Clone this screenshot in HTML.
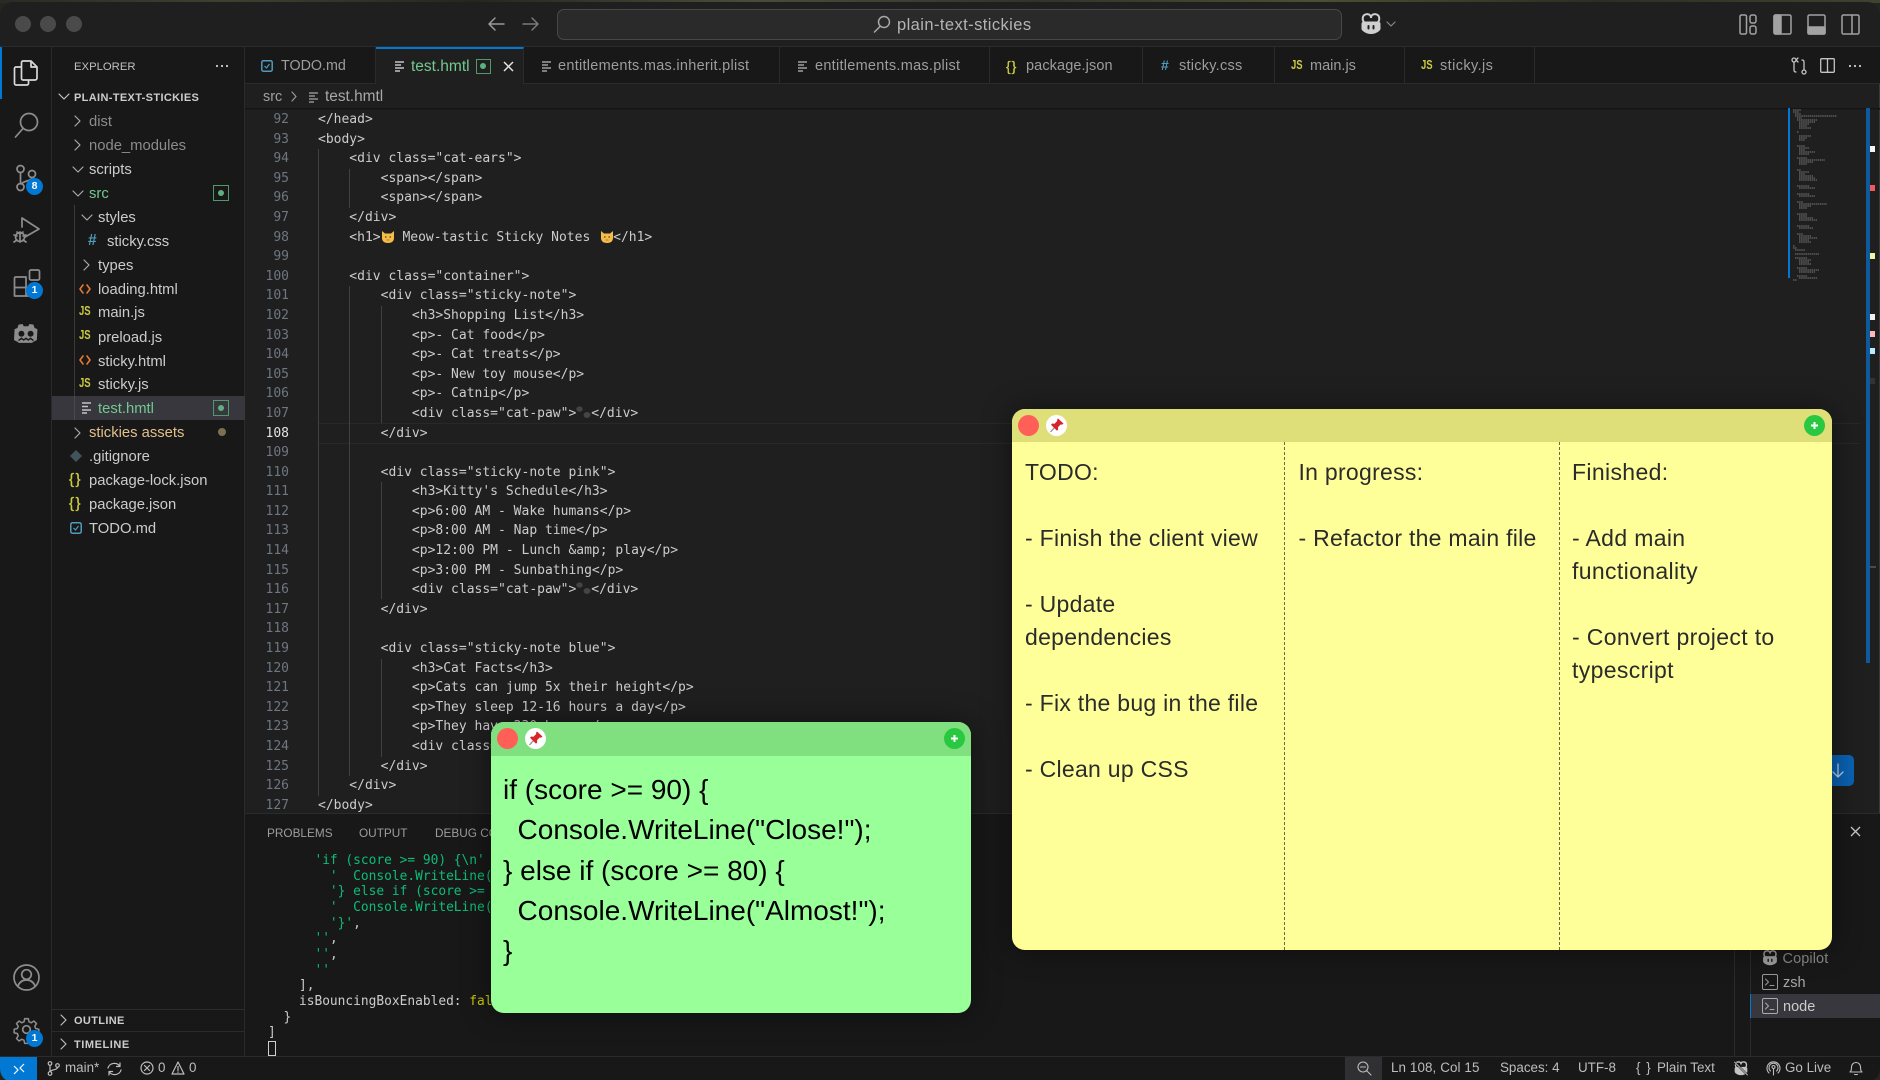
<!DOCTYPE html>
<html lang="en">
<head>
<meta charset="utf-8">
<title>plain-text-stickies</title>
<style>
*{box-sizing:border-box}
html,body{margin:0;padding:0;width:1880px;height:1080px;overflow:hidden;background:#23261c}
body{font-family:"Liberation Sans","DejaVu Sans",sans-serif;font-size:14.5px;color:#ccc;position:relative}
.strip{position:absolute;left:0;top:0;width:1880px;height:3px;background:linear-gradient(90deg,#2a2a24,#3c4230 12%,#26261e 25%,#4a4c3a 40%,#30342a 55%,#4a5030 70%,#2c2e22 85%,#3e4430)}
.win{position:absolute;left:0;top:2px;width:1880px;height:1078px;background:#1f1f1f;border-radius:13px 13px 13px 13px;overflow:hidden;box-shadow:inset 0 0 0 1px #3a3a3a}
.a{position:absolute}
.t{position:absolute;white-space:pre}
svg{display:block;overflow:visible}
svg.a{position:absolute}
.i{fill:none;stroke:#8d8d8d;stroke-width:1.5;stroke-linecap:round;stroke-linejoin:round}
.r{position:absolute;white-space:pre;height:24px;line-height:24px;font-size:14.8px;color:#cccccc;margin-top:1px}
.dim{color:#8c8c8c}.gr{color:#73c991}.ye{color:#e2c08d}
.tab{position:absolute;top:45px;height:37px;line-height:38px;background:#181818;border-right:1px solid #2b2b2b;border-bottom:1px solid #2b2b2b;color:#9d9d9d;font-size:14.5px;white-space:pre}
pre{margin:0;font-family:"DejaVu Sans Mono","Liberation Mono",monospace}
.hdr{font-size:11px;font-weight:bold;color:#cccccc;letter-spacing:.35px;margin-top:1px}
.gd{position:absolute;width:1px;background:#404040}
.badge{position:absolute;width:17px;height:17px;border-radius:50%;background:#0078d4;color:#fff;font-size:10.5px;font-weight:bold;text-align:center;line-height:17px}
.sb{position:absolute;top:1057px;font-size:13.4px;color:#bdbdbd;line-height:22px;white-space:pre}
.sticky{position:absolute;border-radius:13px;overflow:hidden;box-shadow:0 0 30px rgba(0,0,0,.45)}
.bar{position:absolute;left:0;top:0;width:100%}
.close{position:absolute;width:21px;height:21px;border-radius:50%;background:#ff5f57}
.pin{position:absolute;width:21px;height:21px;border-radius:50%;background:#fff}
.plus{position:absolute;width:21px;height:21px;border-radius:50%;background:#28c840;color:#fff}
.mk{position:absolute;left:1870px;width:5px;height:6px}
.js{position:absolute;font-size:12.5px;font-weight:bold;line-height:14px;color:#cbcb41;transform:scaleX(.76);transform-origin:0 50%;white-space:pre}
.br{position:absolute;font-size:15px;line-height:24px;color:#cbcb41;letter-spacing:1.5px;white-space:pre;-webkit-text-stroke:.3px #cbcb41}
</style>
</head>
<body>
<div class="strip"></div>
<div class="win" style="top:0;height:1080px;margin-top:2px;">
<div style="position:absolute;left:0;top:-2px;width:1880px;height:1080px">

<!-- title bar -->
<div class="a" style="left:0;top:0;width:1880px;height:47px;background:#1f1f1f;border-bottom:1px solid #2b2b2b"></div>
<div class="a" style="left:15px;top:16px;width:16px;height:16px;border-radius:50%;background:#4a4a4a"></div>
<div class="a" style="left:40px;top:16px;width:16px;height:16px;border-radius:50%;background:#4a4a4a"></div>
<div class="a" style="left:66px;top:16px;width:16px;height:16px;border-radius:50%;background:#4a4a4a"></div>
<svg class="a i" style="left:487px;top:16px;stroke:#9a9a9a" width="18" height="16"><path d="M17 8H2M8 2L2 8l6 6"/></svg>
<svg class="a i" style="left:522px;top:16px;stroke:#7a7a7a" width="18" height="16"><path d="M1 8h15M10 2l6 6-6 6"/></svg>
<div class="a" style="left:557px;top:9px;width:785px;height:31px;background:#2a2a2a;border:1.5px solid #484848;border-radius:7px"></div>
<svg class="a i" style="left:873px;top:15px;stroke:#a8a8a8" width="18" height="18"><circle cx="11" cy="7" r="5.5"/><path d="M7 11.5L1.5 17"/></svg>
<div class="t" style="left:897px;top:15px;font-size:16.5px;line-height:20px;letter-spacing:.42px;color:#b4b4b4">plain-text-stickies</div>
<svg class="a" style="left:1359px;top:13px" width="24" height="22" viewBox="0 0 24 22"><path fill="none" stroke="#cfcfcf" stroke-width="2" d="M6.500 10C4 9 3.500 7 3.800 4.800 4.200 2 6.500 1 9 1.200c2 .2 3 1.800 3 3.800 0-2 1-3.600 3-3.800 2.500-.2 4.800.8 5.200 3.600.3 2.200-.2 4.200-2.700 5.200"/><path fill="#cfcfcf" d="M2.500 11c0-1.500 1-2.500 3-2.500h13c2 0 3 1 3 2.500v5c0 1-3.500 5-9.500 5s-9.500-4-9.500-5z"/><rect x="8.500" y="12" width="2" height="4.500" rx="1" fill="#1f1f1f"/><rect x="13.500" y="12" width="2" height="4.500" rx="1" fill="#1f1f1f"/></svg>
<svg class="a i" style="left:1386px;top:21px;stroke:#888;stroke-width:1.200" width="10" height="6"><path d="M1 1l4 4 4-4"/></svg>
<!-- layout buttons -->
<svg class="a" style="left:1739px;top:13px" width="130" height="22" fill="none" stroke="#a2a2a2" stroke-width="1.500">
<rect x="1" y="2" width="6.500" height="19" rx="1.500"/><rect x="11" y="2" width="6" height="8" rx="2"/><rect x="11" y="13" width="6" height="8" rx="2"/>
<rect x="35" y="2" width="17" height="19" rx="1.500"/><rect x="35" y="2" width="7" height="19" rx="1.500" fill="#a2a2a2"/>
<rect x="69" y="2" width="17" height="19" rx="1.500"/><rect x="69" y="14" width="17" height="7" rx="1" fill="#a2a2a2"/>
<rect x="103" y="2" width="17" height="19" rx="1.500"/><path d="M113 2v19"/>
</svg>

<!-- activity bar -->
<div class="a" style="left:0;top:47px;width:52px;height:1010px;background:#181818;border-right:1px solid #2b2b2b"></div>
<div class="a" style="left:0;top:47px;width:2px;height:52px;background:#0078d4"></div>
<svg class="a" style="left:13px;top:59px;stroke:#d8d8d8;fill:none;stroke-width:1.700;stroke-linejoin:round" width="26" height="28"><path d="M10 2h8l6 6v11a2 2 0 0 1-2 2H10a1.500 1.500 0 0 1-1.500-1.500V3.500A1.500 1.500 0 0 1 10 2zM8.500 8H3a1.500 1.500 0 0 0-1.500 1.500v15A1.500 1.500 0 0 0 3 26h11a1.500 1.500 0 0 0 1.500-1.500V21"/><path d="M18 2v6h6"/></svg>
<svg class="a i" style="left:14px;top:112px;stroke-width:1.700" width="26" height="28"><circle cx="15" cy="10" r="8.500"/><path d="M9 16.500L1.500 25"/></svg>
<svg class="a i" style="left:15px;top:164px;stroke-width:1.700" width="24" height="28"><circle cx="5.500" cy="5" r="3.500"/><circle cx="5.500" cy="23" r="3.500"/><circle cx="17" cy="10" r="3.500"/><path d="M5.500 8.500v11M17 13.500c0 3.500-8 3-11 6.500"/></svg>
<div class="badge" style="left:26px;top:178px">8</div>
<svg class="a i" style="left:12px;top:216px;stroke-width:1.700" width="30" height="30"><path d="M10 2l17 11-14 8M10 2v9"/><circle cx="8" cy="21" r="4.500"/><path d="M8 16v10M2 19l3 1M2 26l3-2M14 19l-3 1M14 26l-3-2"/><path d="M5 16l2 1.500M11 16l-2 1.500"/></svg>
<svg class="a i" style="left:13px;top:269px;stroke-width:1.700" width="28" height="28"><rect x="16.500" y="1" width="10" height="10" rx="1.500"/><path d="M2.500 8h10.500v10.500M13 18.500h10.500M13 18.500H1.500V9a1 1 0 0 1 1-1M13 18.500V27M1.500 18.500V27H13M23.500 18.500V27H13"/></svg>
<div class="badge" style="left:26px;top:282px">1</div>
<svg class="a" style="left:14px;top:323px" width="24" height="22" viewBox="1.500 3 21 18.500"><path fill="#8c8c8c" d="M2 8l2.500-1 1-3 3.500-.5 1 2h4l1-2 3.500.5 1 3 2.500 1-.5 9.500c-2 1.500-3 1-4 2.500h-12c-1-1.500-2-1-4-2.500z"/><circle cx="8" cy="12" r="2.600" fill="#181818"/><circle cx="16" cy="12" r="2.600" fill="#181818"/><path d="M5.500 18l2.500-2 2 1.500 2-1.500 2 1.500 2-1.500 2.500 2" stroke="#181818" fill="none" stroke-width="1.200"/></svg>
<svg class="a i" style="left:13px;top:964px;stroke-width:1.700" width="27" height="27"><circle cx="13.500" cy="13.500" r="12.500"/><circle cx="13.500" cy="10.500" r="4.800"/><path d="M5 22c1.500-4 4-6 8.500-6s7 2 8.500 6"/></svg>
<svg class="a" style="left:13px;top:1016px" width="27" height="27" viewBox="0 0 27 27"><circle cx="13.500" cy="13.500" r="3.800" fill="none" stroke="#8d8d8d" stroke-width="1.700"/><path fill="none" stroke="#8d8d8d" stroke-width="1.700" stroke-linejoin="round" d="M11.500 1.500h4l.8 3.500 2.500 1 3-1.900 2.800 2.800-1.900 3 1 2.500 3.500.8v4l-3.500.8-1 2.500 1.900 3-2.800 2.800-3-1.900-2.500 1-.8 3.500h-4l-.8-3.500-2.500-1-3 1.900-2.800-2.800 1.900-3-1-2.500-3.500-.8v-4l3.500-.8 1-2.500-1.900-3 2.800-2.800 3 1.900 2.500-1z" transform="translate(1.350 1.350) scale(.9)"/></svg>
<div class="badge" style="left:26px;top:1030px">1</div>

<!-- sidebar -->
<div class="a" style="left:52px;top:47px;width:193px;height:1010px;background:#181818;border-right:1px solid #2b2b2b"></div>
<div class="t" style="left:74px;top:59px;font-size:11.300px;line-height:16px;color:#c0c0c0">EXPLORER</div>
<svg class="a" style="left:215px;top:64px" width="14" height="4" fill="#ccc"><circle cx="2" cy="2" r="1.100"/><circle cx="7" cy="2" r="1.100"/><circle cx="12" cy="2" r="1.100"/></svg>
<svg class="a i" style="left:58px;top:93px;stroke:#c4c4c4;stroke-width:1.200" width="12" height="8"><path d="M1 1l5 5 5-5"/></svg>
<div class="t hdr" style="left:74px;top:89px;line-height:16px">PLAIN-TEXT-STICKIES</div>

<svg class="a i" style="left:74px;top:115px;stroke:#aaa;stroke-width:1.200" width="7" height="12"><path d="M1 1l5 5-5 5"/></svg>
<div class="r dim" style="left:89px;top:109px">dist</div>
<svg class="a i" style="left:74px;top:139px;stroke:#aaa;stroke-width:1.200" width="7" height="12"><path d="M1 1l5 5-5 5"/></svg>
<div class="r dim" style="left:89px;top:133px">node_modules</div>
<svg class="a i" style="left:72px;top:166px;stroke:#aaa;stroke-width:1.200" width="12" height="7"><path d="M1 1l5 5 5-5"/></svg>
<div class="r" style="left:89px;top:157px">scripts</div>
<svg class="a i" style="left:72px;top:190px;stroke:#aaa;stroke-width:1.200" width="12" height="7"><path d="M1 1l5 5 5-5"/></svg>
<div class="r gr" style="left:89px;top:181px">src</div>
<div class="a" style="left:213px;top:185px;width:16px;height:16px;border:1.500px solid #4f9a6c"><div class="a" style="left:3.500px;top:3.500px;width:6px;height:6px;border-radius:50%;background:#5fb080"></div></div>
<div class="gd" style="left:74px;top:205px;height:215px;background:#3a3a3a"></div>
<svg class="a i" style="left:81px;top:214px;stroke:#aaa;stroke-width:1.200" width="12" height="7"><path d="M1 1l5 5 5-5"/></svg>
<div class="r" style="left:98px;top:205px">styles</div>
<div class="t" style="left:88px;top:229px;font-size:15.500px;font-weight:bold;line-height:24px;color:#519aba">#</div>
<div class="r" style="left:107px;top:229px">sticky.css</div>
<svg class="a i" style="left:83px;top:259px;stroke:#aaa;stroke-width:1.200" width="7" height="12"><path d="M1 1l5 5-5 5"/></svg>
<div class="r" style="left:98px;top:253px">types</div>
<svg class="a i" style="left:79px;top:284px;stroke:#e37933;stroke-width:1.600" width="12" height="10"><path d="M4 1L1 5l3 4M8 1l3 4-3 4"/></svg>
<div class="r" style="left:98px;top:277px">loading.html</div>
<div class="js" style="left:79px;top:304px">JS</div>
<div class="r" style="left:98px;top:300px">main.js</div>
<div class="js" style="left:79px;top:328px">JS</div>
<div class="r" style="left:98px;top:325px">preload.js</div>
<svg class="a i" style="left:79px;top:355px;stroke:#e37933;stroke-width:1.600" width="12" height="10"><path d="M4 1L1 5l3 4M8 1l3 4-3 4"/></svg>
<div class="r" style="left:98px;top:349px">sticky.html</div>
<div class="js" style="left:79px;top:376px">JS</div>
<div class="r" style="left:98px;top:372px">sticky.js</div>
<div class="a" style="left:52px;top:396px;width:193px;height:24px;background:#37373d"></div>
<div class="gd" style="left:74px;top:396px;height:24px;background:#4a4a4e"></div>
<svg class="a" style="left:82px;top:402px;stroke:#c4c4c4;stroke-width:1.500" width="10" height="12"><path d="M0 1h9M0 4.500h6M0 8h9M0 11h5"/></svg>
<div class="r gr" style="left:98px;top:396px">test.hmtl</div>
<div class="a" style="left:213px;top:400px;width:16px;height:16px;border:1.500px solid #4f9a6c"><div class="a" style="left:3.500px;top:3.500px;width:6px;height:6px;border-radius:50%;background:#5fb080"></div></div>
<svg class="a i" style="left:74px;top:427px;stroke:#aaa;stroke-width:1.200" width="7" height="12"><path d="M1 1l5 5-5 5"/></svg>
<div class="r ye" style="left:89px;top:420px">stickies assets</div>
<div class="a" style="left:218px;top:428px;width:8px;height:8px;border-radius:50%;background:#7d6f52"></div>
<svg class="a" style="left:70px;top:450px" width="12" height="12"><path d="M6 0l6 6-6 6-6-6z" fill="#41535b"/></svg>
<div class="r" style="left:89px;top:444px">.gitignore</div>
<div class="br" style="left:69px;top:468px">{}</div>
<div class="r" style="left:89px;top:468px">package-lock.json</div>
<div class="br" style="left:69px;top:492px">{}</div>
<div class="r" style="left:89px;top:492px">package.json</div>
<svg class="a" style="left:70px;top:522px" width="12" height="12"><rect x=".8" y=".8" width="10.400" height="10.400" rx="1.500" fill="none" stroke="#519aba" stroke-width="1.500"/><path d="M3.500 6l2 2 3-4" fill="none" stroke="#519aba" stroke-width="1.200"/></svg>
<div class="r" style="left:89px;top:516px">TODO.md</div>

<div class="a" style="left:52px;top:1009px;width:193px;height:1px;background:#2b2b2b"></div>
<svg class="a i" style="left:60px;top:1014px;stroke:#bbb;stroke-width:1.200" width="7" height="12"><path d="M1 1l5 5-5 5"/></svg>
<div class="t hdr" style="left:74px;top:1012px;line-height:16px">OUTLINE</div>
<div class="a" style="left:52px;top:1031px;width:193px;height:1px;background:#2b2b2b"></div>
<svg class="a i" style="left:60px;top:1038px;stroke:#bbb;stroke-width:1.200" width="7" height="12"><path d="M1 1l5 5-5 5"/></svg>
<div class="t hdr" style="left:74px;top:1036px;line-height:16px;letter-spacing:.55px">TIMELINE</div>

<!-- tabs -->
<div class="a" style="left:245px;top:47px;width:1635px;height:37px;background:#181818;border-bottom:1px solid #2b2b2b"></div>
<div class="tab" style="left:245px;top:47px;width:131px;padding-left:36px;font-size:14.300px">TODO.md</div>
<svg class="a" style="left:261px;top:60px" width="12" height="12"><rect x=".8" y=".8" width="10.400" height="10.400" rx="1.500" fill="none" stroke="#519aba" stroke-width="1.500"/><path d="M3.500 6l2 2 3-4" fill="none" stroke="#519aba" stroke-width="1.200"/></svg>
<div class="tab" style="left:376px;top:47px;width:148px;padding-left:35px;background:#1f1f1f;border-bottom:none;color:#73c991;border-top:2px solid #0078d4;line-height:35px;font-size:15.500px">test.hmtl</div>
<svg class="a" style="left:395px;top:61px;stroke:#c4c4c4;stroke-width:1.500" width="10" height="11"><path d="M0 1h9M0 4h6M0 7h9M0 10h5"/></svg>
<div class="a" style="left:476px;top:59px;width:15px;height:15px;border:1.500px solid #4f9a6c"><div class="a" style="left:3px;top:3px;width:6px;height:6px;border-radius:50%;background:#5fb080"></div></div>
<svg class="a" style="left:503px;top:61px;stroke:#e4e4e4;stroke-width:1.500" width="11" height="11"><path d="M1 1l9 9M10 1l-9 9"/></svg>
<div class="tab" style="left:524px;top:47px;width:256px;padding-left:34px;letter-spacing:.28px">entitlements.mas.inherit.plist</div>
<svg class="a" style="left:542px;top:61px;stroke:#bbb;stroke-width:1.300" width="10" height="11"><path d="M0 1h9M0 4h6M0 7h9M0 10h5"/></svg>
<div class="tab" style="left:780px;top:47px;width:210px;padding-left:35px;letter-spacing:.27px">entitlements.mas.plist</div>
<svg class="a" style="left:798px;top:61px;stroke:#bbb;stroke-width:1.300" width="10" height="11"><path d="M0 1h9M0 4h6M0 7h9M0 10h5"/></svg>
<div class="tab" style="left:990px;top:47px;width:153px;padding-left:36px;letter-spacing:.1px">package.json</div>
<div class="br" style="left:1006px;top:54px;font-size:14px;letter-spacing:1px">{}</div>
<div class="tab" style="left:1143px;top:47px;width:132px;padding-left:36px;letter-spacing:.25px">sticky.css</div>
<div class="t" style="left:1161px;top:55px;font-size:14px;font-weight:bold;line-height:20px;color:#519aba">#</div>
<div class="tab" style="left:1275px;top:47px;width:130px;padding-left:35px">main.js</div>
<div class="js" style="left:1291px;top:58px">JS</div>
<div class="tab" style="left:1405px;top:47px;width:130px;padding-left:35px;letter-spacing:.4px">sticky.js</div>
<div class="js" style="left:1421px;top:58px">JS</div>
<svg class="a i" style="left:1791px;top:57px;stroke:#c4c4c4;stroke-width:1.300" width="16" height="18"><circle cx="3" cy="3" r="2"/><circle cx="13" cy="15" r="2"/><path d="M3 5v8c0 1 .5 2 2 2M13 13V5c0-1-.5-2-2-2M7 1L5 3l2 2M9 1"/></svg>
<svg class="a i" style="left:1820px;top:58px;stroke:#c4c4c4;stroke-width:1.300" width="15" height="15"><rect x=".7" y=".7" width="13.600" height="13.600" rx="1"/><path d="M7.500 .7v13.600"/></svg>
<svg class="a" style="left:1848px;top:64px" width="14" height="4" fill="#ccc"><circle cx="2" cy="2" r="1.100"/><circle cx="7" cy="2" r="1.100"/><circle cx="12" cy="2" r="1.100"/></svg>

<!-- breadcrumb -->
<div class="t" style="left:263px;top:87px;font-size:14.400px;line-height:20px;color:#a0a0a0">src</div>
<svg class="a i" style="left:291px;top:91px;stroke:#999;stroke-width:1.200" width="6" height="11"><path d="M1 1l4 4.500-4 4.500"/></svg>
<svg class="a" style="left:309px;top:92px;stroke:#a8a8a8;stroke-width:1.300" width="10" height="11"><path d="M0 1h9M0 4h6M0 7h9M0 10h5"/></svg>
<div class="t" style="left:325px;top:87px;font-size:15.400px;line-height:20px;color:#a8a8a8">test.hmtl</div>
<div class="a" style="left:245px;top:108px;width:1635px;height:2px;background:linear-gradient(#111,#1f1f1f)"></div>

<!-- editor -->
<div class="a" style="left:319px;top:423px;width:1541px;height:21px;border-top:1.500px solid #282828;border-bottom:1.500px solid #282828"></div>
<!-- indent guides -->
<div class="gd" style="left:318px;top:149px;height:647px"></div>
<div class="gd" style="left:349px;top:169px;height:39px"></div>
<div class="gd" style="left:349px;top:286px;height:490px"></div>
<div class="gd" style="left:381px;top:306px;height:117px"></div>
<div class="gd" style="left:381px;top:482px;height:117px"></div>
<div class="gd" style="left:381px;top:659px;height:98px"></div>

<pre class="a" style="left:245px;top:110px;width:44px;text-align:right;font-size:13px;line-height:19.600px;color:#6e7681">92
93
94
95
96
97
98
99
100
101
102
103
104
105
106
107
<span style="color:#e4e4e4">108</span>
109
110
111
112
113
114
115
116
117
118
119
120
121
122
123
124
125
126
127</pre>
<pre class="a" style="left:318px;top:110px;font-size:13px;line-height:19.600px;color:#cccccc">&lt;/head&gt;
&lt;body&gt;
    &lt;div class="cat-ears"&gt;
        &lt;span&gt;&lt;/span&gt;
        &lt;span&gt;&lt;/span&gt;
    &lt;/div&gt;
    &lt;h1&gt;<svg style="display:inline-block;vertical-align:-2px;margin-left:1px;margin-right:1px" width="12" height="13" viewBox="0 0 12 13"><path fill="#f4bc48" d="M0 1l3 2.500h6L12 1v7c0 3-2 5-6 5s-6-2-6-5z"/><circle cx="3.800" cy="7" r=".9" fill="#7a5418"/><circle cx="8.200" cy="7" r=".9" fill="#7a5418"/><path d="M4.500 10h3" stroke="#b87a30"/></svg> Meow-tastic Sticky Notes <svg style="display:inline-block;vertical-align:-2px;margin-left:3px;margin-right:0" width="12" height="13" viewBox="0 0 12 13"><path fill="#f4bc48" d="M0 1l3 2.500h6L12 1v7c0 3-2 5-6 5s-6-2-6-5z"/><circle cx="3.800" cy="7" r=".9" fill="#7a5418"/><circle cx="8.200" cy="7" r=".9" fill="#7a5418"/><path d="M4.500 10h3" stroke="#b87a30"/></svg>&lt;/h1&gt;

    &lt;div class="container"&gt;
        &lt;div class="sticky-note"&gt;
            &lt;h3&gt;Shopping List&lt;/h3&gt;
            &lt;p&gt;- Cat food&lt;/p&gt;
            &lt;p&gt;- Cat treats&lt;/p&gt;
            &lt;p&gt;- New toy mouse&lt;/p&gt;
            &lt;p&gt;- Catnip&lt;/p&gt;
            &lt;div class="cat-paw"&gt;<svg style="display:inline-block;vertical-align:-2px" width="15" height="13" viewBox="0 0 15 13"><g fill="#444"><ellipse cx="3.500" cy="3" rx="3.200" ry="2.600"/><ellipse cx="11" cy="9" rx="3.400" ry="3"/></g></svg>&lt;/div&gt;
        &lt;/div&gt;

        &lt;div class="sticky-note pink"&gt;
            &lt;h3&gt;Kitty's Schedule&lt;/h3&gt;
            &lt;p&gt;6:00 AM - Wake humans&lt;/p&gt;
            &lt;p&gt;8:00 AM - Nap time&lt;/p&gt;
            &lt;p&gt;12:00 PM - Lunch &amp;amp; play&lt;/p&gt;
            &lt;p&gt;3:00 PM - Sunbathing&lt;/p&gt;
            &lt;div class="cat-paw"&gt;<svg style="display:inline-block;vertical-align:-2px" width="15" height="13" viewBox="0 0 15 13"><g fill="#444"><ellipse cx="3.500" cy="3" rx="3.200" ry="2.600"/><ellipse cx="11" cy="9" rx="3.400" ry="3"/></g></svg>&lt;/div&gt;
        &lt;/div&gt;

        &lt;div class="sticky-note blue"&gt;
            &lt;h3&gt;Cat Facts&lt;/h3&gt;
            &lt;p&gt;Cats can jump 5x their height&lt;/p&gt;
            &lt;p&gt;They sleep 12-16 hours a day&lt;/p&gt;
            &lt;p&gt;They have 230 bones&lt;/p&gt;
            &lt;div class="cat-paw"&gt;&lt;/div&gt;
        &lt;/div&gt;
    &lt;/div&gt;
&lt;/body&gt;</pre>

<!-- minimap -->
<div class="a" style="left:1788px;top:108px;width:1.500px;height:170px;background:#0078d4"></div>
<svg class="a" style="left:1792px;top:108px;stroke:#7a7a7a;stroke-width:1" width="60" height="175" fill="none" stroke-dasharray="1.500 .6"><path d="M1 2h8M1 4h6M3 6h6M3 8h42M5 10h5M5 12h20M7 14h16M7 16h10M7 18h8M7 20h12M5 24h2M7 28h12M7 30h8M7 32h6M5 38h8M7 40h10M7 42h6M7 44h16M7 46h10M5 50h10M7 52h26M7 54h14M7 56h8M5 62h4M7 64h10M7 66h6M7 68h14M7 70h16M7 72h18M5 78h12M7 80h16M5 86h12M7 88h16M5 94h6M7 96h28M7 98h12M7 100h8M5 106h10M7 108h8M7 110h14M7 112h18M5 118h12M7 120h14M5 126h6M7 128h12M7 130h18M7 132h10M7 134h12M1 138h2M1 140h4M3 142h10M3 146h24M3 150h12M7 152h12M7 154h10M7 156h12M5 160h10M7 162h20M7 164h16M5 168h10M7 170h18M1 172h4"/></svg>
<div class="a" style="left:1866px;top:108px;width:4px;height:555px;background:#0e5a9a"></div>
<div class="mk" style="top:146px;background:#f4f4f4"></div>
<div class="mk" style="top:185px;background:#f05a5a"></div>
<div class="mk" style="top:253px;background:#f2f2a8"></div>
<div class="mk" style="top:314px;background:#f0f0f0"></div>
<div class="mk" style="top:331px;background:#ffb8b8"></div>
<div class="mk" style="top:348px;background:#b8ecff"></div>
<div class="mk" style="top:378px;background:#333"></div>
<div class="a" style="left:1870px;top:566px;width:6px;height:2px;background:#4a4a4a"></div>
<!-- scroll to bottom button -->
<div class="a" style="left:1800px;top:755px;width:54px;height:31px;background:#0a62b3;border-radius:5px"></div>
<svg class="a i" style="left:1832px;top:763px;stroke:#b8cfe6;stroke-width:1.300" width="12" height="16"><path d="M6 1v13M1 9l5 5 5-5"/></svg>

<!-- panel -->
<div class="a" style="left:245px;top:813px;width:1635px;height:244px;background:#181818;border-top:1px solid #2b2b2b"></div>
<div class="t" style="left:267px;top:825px;font-size:11.800px;line-height:16px;color:#9d9d9d">PROBLEMS</div>
<div class="t" style="left:359px;top:825px;font-size:11.800px;line-height:16px;color:#9d9d9d">OUTPUT</div>
<div class="t" style="left:435px;top:825px;font-size:11.800px;line-height:16px;color:#9d9d9d">DEBUG CONSOLE</div>
<svg class="a" style="left:1850px;top:826px;stroke:#c8c8c8;stroke-width:1.300" width="11" height="11"><path d="M1 1l9 9M10 1l-9 9"/></svg>
<pre class="a" style="left:268px;top:853px;font-size:12.870px;line-height:15.670px;color:#cccccc"><span style="color:#0dbc79">      'if (score &gt;= 90) {\n' +
        '  Console.WriteLine("Close!");\n' +
        '} else if (score &gt;= 80) {\n' +
        '  Console.WriteLine("Almost!");\n' +
        '}'</span>,
      <span style="color:#0dbc79">''</span>,
      <span style="color:#0dbc79">''</span>,
      <span style="color:#0dbc79">''</span>
    ],
    isBouncingBoxEnabled: <span style="color:#c8c800">false</span>
  }
]</pre>
<div class="a" style="left:268px;top:1041px;width:8px;height:15px;border:1.500px solid #cfcfcf"></div>
<div class="a" style="left:1734px;top:950px;width:1px;height:107px;background:#2b2b2b"></div>
<div class="a" style="left:1750px;top:950px;width:1px;height:107px;background:#2b2b2b"></div>
<svg class="a" style="left:1761px;top:950px" width="18" height="16" viewBox="0 0 24 22"><path fill="none" stroke="#a0a0a0" stroke-width="2" d="M6.500 10C4 9 3.500 7 3.800 4.800 4.200 2 6.500 1 9 1.200c2 .2 3 1.800 3 3.800 0-2 1-3.600 3-3.800 2.500-.2 4.800.8 5.200 3.600.3 2.200-.2 4.200-2.700 5.200"/><path fill="#a0a0a0" d="M2.500 11c0-1.500 1-2.500 3-2.500h13c2 0 3 1 3 2.500v5c0 1-3.500 5-9.500 5s-9.500-4-9.500-5z"/><rect x="8.500" y="12" width="2" height="4.500" rx="1" fill="#181818"/><rect x="13.500" y="12" width="2" height="4.500" rx="1" fill="#181818"/></svg>
<div class="t" style="left:1782.500px;top:949px;font-size:14.500px;line-height:20px;letter-spacing:.1px;color:#8c8c8c">Copilot</div>
<svg class="a i" style="left:1762px;top:974px;stroke:#999;stroke-width:1" width="16" height="16"><rect x=".5" y=".5" width="15" height="15" rx="1.500"/><path d="M3.500 5l3 3-3 3M8 11.500h4"/></svg>
<div class="t" style="left:1783px;top:973px;font-size:14.500px;line-height:20px;color:#a8a8a8">zsh</div>
<div class="a" style="left:1750px;top:994px;width:130px;height:24px;background:#37373d;border-left:1.500px solid #0078d4"></div>
<svg class="a i" style="left:1762px;top:998px;stroke:#aaa;stroke-width:1" width="16" height="16"><rect x=".5" y=".5" width="15" height="15" rx="1.500"/><path d="M3.500 5l3 3-3 3M8 11.500h4"/></svg>
<div class="t" style="left:1783px;top:997px;font-size:14.500px;line-height:20px;color:#cccccc">node</div>

<!-- status bar -->
<div class="a" style="left:0;top:1056px;width:1880px;height:24px;background:#181818;border-top:1px solid #2b2b2b"></div>
<div class="a" style="left:0;top:1057px;width:37px;height:23px;background:#0078d4"></div>
<svg class="a" style="left:13px;top:1063px;stroke:#fff;stroke-width:1.200;fill:none" width="12" height="12"><path d="M1 3l4 4-4 4M11 1L7 5l4 4"/></svg>
<svg class="a i" style="left:47px;top:1061px;stroke:#bdbdbd;stroke-width:1.200" width="13" height="15"><circle cx="3" cy="2.500" r="1.800"/><circle cx="3" cy="12.500" r="1.800"/><circle cx="10.500" cy="4.500" r="1.800"/><path d="M3 4.500v6M10.500 6.500c0 2.500-6 2-7.500 4"/></svg>
<div class="sb" style="left:65px">main*</div>
<svg class="a i" style="left:107px;top:1062px;stroke:#bdbdbd;stroke-width:1.200" width="15" height="14"><path d="M1 6a6.500 6 0 0 1 12-1.500M14 8a6.500 6 0 0 1-12 1.500M13 1v3.500h-3.500M2 13V9.500h3.500"/></svg>
<svg class="a i" style="left:140px;top:1061px;stroke:#bdbdbd;stroke-width:1.200" width="14" height="14"><circle cx="7" cy="7" r="6"/><path d="M4.500 4.500l5 5M9.500 4.500l-5 5"/></svg>
<div class="sb" style="left:158px">0</div>
<svg class="a i" style="left:171px;top:1061px;stroke:#bdbdbd;stroke-width:1.200" width="14" height="14"><path d="M7 1l6 12H1zM7 5.500v4M7 11v.3"/></svg>
<div class="sb" style="left:189px">0</div>
<div class="a" style="left:1345px;top:1057px;width:37px;height:23px;background:#303033"></div>
<svg class="a i" style="left:1357px;top:1061px;stroke:#bdbdbd;stroke-width:1.100" width="15" height="15"><circle cx="6" cy="6" r="5"/><path d="M3.500 6h5M10 10l4 4"/></svg>
<div class="sb" style="left:1391px;letter-spacing:.1px">Ln 108, Col 15</div>
<div class="sb" style="left:1500px">Spaces: 4</div>
<div class="sb" style="left:1578px">UTF-8</div>
<div class="sb" style="left:1636px;letter-spacing:1px">{ }</div>
<div class="sb" style="left:1657px">Plain Text</div>
<svg class="a" style="left:1733px;top:1061px" width="16" height="15" viewBox="0 0 24 22"><path fill="none" stroke="#c4c4c4" stroke-width="2" d="M6.500 10C4 9 3.500 7 3.800 4.800 4.200 2 6.500 1 9 1.200c2 .2 3 1.800 3 3.800 0-2 1-3.600 3-3.800 2.500-.2 4.800.8 5.200 3.600.3 2.200-.2 4.200-2.700 5.200"/><path fill="#c4c4c4" d="M2.500 11c0-1.500 1-2.500 3-2.500h13c2 0 3 1 3 2.500v5c0 1-3.500 5-9.500 5s-9.500-4-9.500-5z"/><path d="M2 1l20 20" stroke="#181818" stroke-width="3"/><path d="M2 1l20 20" stroke="#c4c4c4" stroke-width="1.500"/></svg>
<svg class="a i" style="left:1767px;top:1061px;stroke:#bdbdbd;stroke-width:1.100" width="13" height="15"><circle cx="6.500" cy="6" r="1.500"/><path d="M3.500 10a4.500 4.500 0 1 1 6 0M2 12a6.500 6.500 0 1 1 9 0M6.500 8v6"/></svg>
<div class="sb" style="left:1785px">Go Live</div>
<svg class="a i" style="left:1849px;top:1061px;stroke:#bdbdbd;stroke-width:1.100" width="14" height="15"><path d="M1 11c1-1 1.500-1.500 1.500-5a4.500 4.500 0 0 1 9 0c0 3.500.5 4 1.500 5zM5.500 13.500h3"/></svg>

</div>
</div>

<!-- Yellow sticky -->
<div class="sticky" style="left:1012px;top:409px;width:820px;height:541px;background:#ffff99">
  <div class="bar" style="height:33px;background:#dfdf7a"></div>
  <div class="close" style="left:6px;top:6px"></div>
  <div class="pin" style="left:34px;top:6px"><svg width="21" height="21" viewBox="0 0 21 21"><path d="M4.500 17l4.500-5" stroke="#8a8a9a" stroke-width="1.200"/><path d="M12 3.500l5.500 5-1.500 1.200-1.200-.3-2.800 2.800.2 2.300-1.200 1.200-6-6 1.200-1.200 2.300.2 2.800-2.800-.3-1.200z" fill="#d8252b"/></svg></div>
  <div class="plus" style="left:792px;top:6px"><svg width="21" height="21"><path d="M10.500 7v7M7 10.500h7" stroke="#fff" stroke-width="2"/></svg></div>
  <div class="a" style="left:272px;top:33px;width:0;height:508px;border-left:1.500px dashed #6a6a4c"></div>
  <div class="a" style="left:547px;top:33px;width:0;height:508px;border-left:1.500px dashed #6a6a4c"></div>
  <div class="t" style="left:13px;top:47px;font-size:23px;line-height:33px;letter-spacing:.28px;color:#2b2b2b">TODO:

- Finish the client view

- Update
dependencies

- Fix the bug in the file

- Clean up CSS</div>
  <div class="t" style="left:286.500px;top:47px;font-size:23px;line-height:33px;letter-spacing:.28px;color:#2b2b2b">In progress:

- Refactor the main file</div>
  <div class="t" style="left:560px;top:47px;font-size:23px;line-height:33px;letter-spacing:.35px;color:#2b2b2b">Finished:

- Add main
functionality

- Convert project to
typescript</div>
</div>

<!-- Green sticky -->
<div class="sticky" style="left:491px;top:722px;width:480px;height:291px;background:#99ff99">
  <div class="bar" style="height:34px;background:#80e080"></div>
  <div class="close" style="left:6px;top:6px"></div>
  <div class="pin" style="left:34px;top:6px"><svg width="21" height="21" viewBox="0 0 21 21"><path d="M4.500 17l4.500-5" stroke="#8a8a9a" stroke-width="1.200"/><path d="M12 3.500l5.500 5-1.500 1.200-1.200-.3-2.800 2.800.2 2.300-1.200 1.200-6-6 1.200-1.200 2.300.2 2.800-2.800-.3-1.200z" fill="#d8252b"/></svg></div>
  <div class="plus" style="left:453px;top:6px"><svg width="21" height="21"><path d="M10.500 7v7M7 10.500h7" stroke="#fff" stroke-width="2"/></svg></div>
  <div class="t" style="left:12px;top:48px;font-size:28px;line-height:40.300px;color:#000">if (score &gt;= 90) {
<span style="margin-left:-1px">  Console.WriteLine("Close!");</span>
} else if (score &gt;= 80) {
<span style="margin-left:-1px">  Console.WriteLine("Almost!");</span>
}</div>
</div>
</body>
</html>
